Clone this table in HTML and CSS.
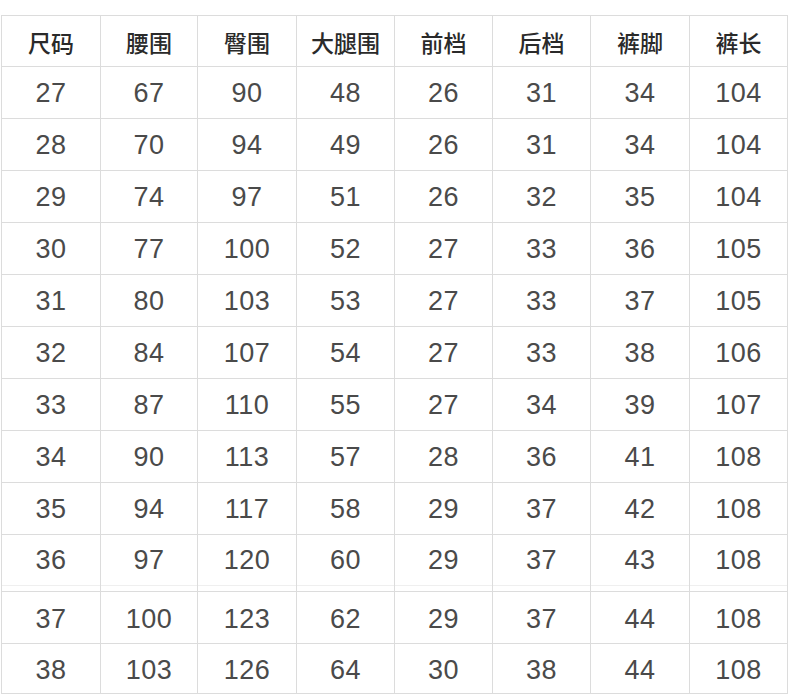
FILE: index.html
```html
<!DOCTYPE html>
<html lang="zh">
<head>
<meta charset="utf-8">
<link rel="stylesheet" href="styles.css">
</head>
<body>
<div class="sheet">
  <div class="grid">
    <div class="h">尺码</div><div class="h">腰围</div><div class="h">臀围</div><div class="h">大腿围</div><div class="h">前档</div><div class="h">后档</div><div class="h">裤脚</div><div class="h">裤长</div>
    <div>27</div><div>67</div><div>90</div><div>48</div><div>26</div><div>31</div><div>34</div><div>104</div>
    <div>28</div><div>70</div><div>94</div><div>49</div><div>26</div><div>31</div><div>34</div><div>104</div>
    <div>29</div><div>74</div><div>97</div><div>51</div><div>26</div><div>32</div><div>35</div><div>104</div>
    <div>30</div><div>77</div><div>100</div><div>52</div><div>27</div><div>33</div><div>36</div><div>105</div>
    <div>31</div><div>80</div><div>103</div><div>53</div><div>27</div><div>33</div><div>37</div><div>105</div>
    <div>32</div><div>84</div><div>107</div><div>54</div><div>27</div><div>33</div><div>38</div><div>106</div>
    <div>33</div><div>87</div><div>110</div><div>55</div><div>27</div><div>34</div><div>39</div><div>107</div>
    <div>34</div><div>90</div><div>113</div><div>57</div><div>28</div><div>36</div><div>41</div><div>108</div>
    <div>35</div><div>94</div><div>117</div><div>58</div><div>29</div><div>37</div><div>42</div><div>108</div>
    <div class="tall">36</div><div class="tall">97</div><div class="tall">120</div><div class="tall">60</div><div class="tall">29</div><div class="tall">37</div><div class="tall">43</div><div class="tall">108</div>
    <div class="low">37</div><div class="low">100</div><div class="low">123</div><div class="low">62</div><div class="low">29</div><div class="low">37</div><div class="low">44</div><div class="low">108</div>
    <div class="low">38</div><div class="low">103</div><div class="low">126</div><div class="low">64</div><div class="low">30</div><div class="low">38</div><div class="low">44</div><div class="low">108</div>
  </div>
</div>
</body>
</html>
```
FILE: styles.css
```css
html, body {
  margin: 0;
  padding: 0;
  background: #ffffff;
}

.sheet {
  padding: 15px 0 0 1px;
}

.grid {
  display: grid;
  grid-template-columns: 98px 96px 98px 97px 97px 97px 98px 97px;
  grid-template-rows: 50px repeat(9, 51px) 56px 51px 49px;
  gap: 1px;
  padding: 1px;
  width: max-content;
  background: #dcdcdc;
}

.grid > div {
  background: #ffffff;
  display: flex;
  align-items: center;
  justify-content: center;
  font-family: "Liberation Sans", Arial, sans-serif;
  font-size: 27px;
  letter-spacing: 0.5px;
  color: #4a4a4a;
  padding-top: 2px;
}

.grid > div.h {
  font-family: "Noto Sans CJK SC", "Noto Sans", sans-serif;
  font-weight: 500;
  font-size: 23px;
  letter-spacing: 0;
  color: #2a2a2a;
  padding-top: 2px;
}

.grid > div.tall {
  padding-top: 0;
  padding-bottom: 5px;
  background: linear-gradient(to bottom, #ffffff 0, #ffffff 50px, #efefef 50px, #efefef 51px, #ffffff 51px);
}

.grid > div.low {
  padding-top: 4px;
}
```
